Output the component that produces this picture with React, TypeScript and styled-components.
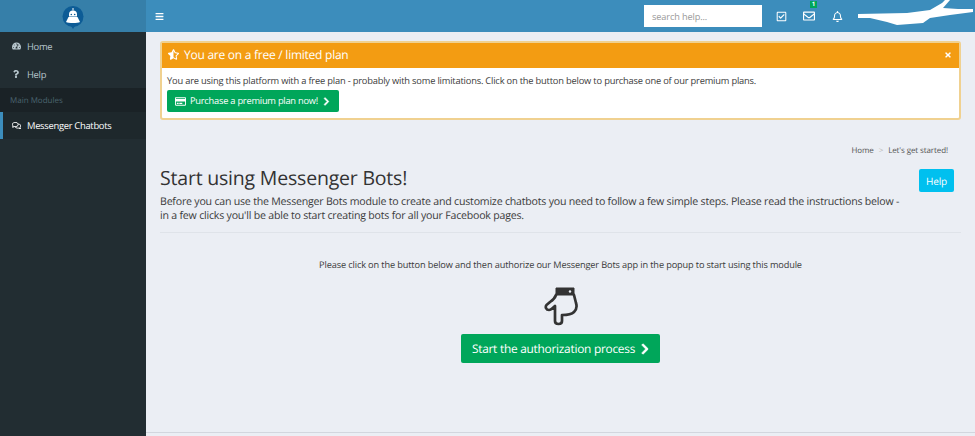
import React from "react";
import styled, { createGlobalStyle } from "styled-components";
import {
  FaTachometerAlt,
  FaQuestion,
  FaRegComments,
  FaBars,
  FaRegCheckSquare,
  FaRegEnvelope,
  FaRegBell,
  FaRegCreditCard,
  FaChevronRight,
  FaTimes,
  FaStarHalfAlt,
} from "react-icons/fa";

const Global = createGlobalStyle`
  html, body { margin: 0; padding: 0; height: 100%; overflow: hidden; }
  body { font-family: "Open Sans", "Liberation Sans", sans-serif; background: #ebeef4; color: #3a3a3a; text-rendering: geometricPrecision; }
  * { box-sizing: border-box; }
`;

const Shell = styled.div`
  display: grid;
  grid-template-columns: 146px 1fr;
  width: 975px;
  height: 436px;
  overflow: hidden;
`;

const Sidebar = styled.aside`
  display: flex;
  flex-direction: column;
  background: #222d32;
`;

const Brand = styled.div`
  height: 32px;
  padding-top: 4px;
  background: #367fa9;
  display: flex;
  justify-content: center;
  align-items: center;
`;

const NavItem = styled.div<{ $active?: boolean }>`
  display: flex;
  align-items: center;
  height: ${(p) => (p.$active ? "27px" : "28px")};
  padding-left: ${(p) => (p.$active ? "9px" : "12px")};
  font-size: 9.4px;
  letter-spacing: -0.29px;
  color: ${(p) => (p.$active ? "#fff" : "#b8c7ce")};
  background: ${(p) => (p.$active ? "#1e282c" : "transparent")};
  border-left: ${(p) => (p.$active ? "3px solid #3c8dbc" : "none")};
`;

const NavIcon = styled.span<{ $start?: boolean }>`
  display: inline-flex;
  justify-content: ${(p) => (p.$start ? "flex-start" : "center")};
  width: 9px;
  margin-right: 6px;
  font-size: 10px;
`;

const NavHeader = styled.div`
  height: 24px;
  background: #1a2226;
  color: #4b646f;
  font-size: 8px;
  padding-left: 10px;
  display: flex;
  align-items: center;
`;

const Column = styled.div`
  display: flex;
  flex-direction: column;
  min-width: 0;
`;

const Topbar = styled.header`
  height: 32px;
  background: #3c8dbc;
  display: flex;
  align-items: center;
  color: #fff;
  position: relative;
`;

const Burger = styled.span`
  display: inline-flex;
  margin-left: 9px;
  font-size: 9px;
`;

const Tools = styled.div`
  margin-left: auto;
  display: flex;
  align-items: center;
  height: 100%;
  padding-right: 124px;
`;

const Search = styled.div`
  width: 118px;
  height: 22px;
  background: #fff;
  color: #999;
  font-size: 9.2px;
  letter-spacing: -0.12px;
  display: flex;
  align-items: center;
  padding-left: 8px;
  margin-right: 5px;
`;

const ToolIcon = styled.span`
  position: relative;
  width: 28px;
  display: inline-flex;
  justify-content: center;
  font-size: 10px;
`;

const Badge = styled.span`
  position: absolute;
  top: -9px;
  left: 15px;
  width: 7px;
  height: 7px;
  background: #00a65a;
  color: #fff;
  font-size: 6px;
  font-weight: 700;
  line-height: 7px;
  text-align: center;
`;

const Scribble = styled.svg`
  position: absolute;
  right: 0;
  top: 0;
`;

const Content = styled.main`
  flex: 1;
  padding: 9px 14px 0 14px;
  display: flex;
  flex-direction: column;
  border-bottom: 1px solid #d2d6de;
  margin-bottom: 3px;
`;

const Alert = styled.section`
  height: 79px;
  background: #fff;
  border: 2px solid #f0d190;
  border-radius: 3px;
  display: flex;
  flex-direction: column;
`;

const AlertHead = styled.div`
  height: 25px;
  background: #f39c12;
  color: #fff;
  display: flex;
  align-items: center;
  padding: 0 7px 2px 6px;
  font-size: 12px;
  letter-spacing: -0.25px;
`;

const AlertTitle = styled.span`
  display: inline-flex;
  align-items: center;
  gap: 5px;
`;

const Close = styled.span`
  margin-left: auto;
  display: inline-flex;
  font-size: 8px;
`;

const AlertBody = styled.div`
  padding: 6px 5px 0;
  font-size: 9.3px;
  letter-spacing: -0.187px;
  line-height: 14px;
`;

const GreenButton = styled.div<{ $large?: boolean }>`
  display: inline-flex;
  align-items: center;
  background: #00a65a;
  color: #fff;
  border-radius: 2px;
  gap: 4px;
  font-size: ${(p) => (p.$large ? "11.9px" : "9.3px")};
  letter-spacing: ${(p) => (p.$large ? "-0.26px" : "-0.24px")};
  height: ${(p) => (p.$large ? "29px" : "22px")};
  padding: ${(p) => (p.$large ? "0 9px 0 11px" : "0 8px")};
`;

const Chevron = styled(FaChevronRight)`
  stroke: currentColor;
  stroke-width: 30px;
`;

const PurchaseRow = styled.div`
  margin-top: 2px;
`;

const Crumbs = styled.nav`
  margin-top: 25px;
  padding-right: 13px;
  display: flex;
  justify-content: flex-end;
  gap: 5px;
  font-size: 8px;
  letter-spacing: -0.1px;
  color: #555;
  line-height: 12px;
`;

const CrumbSep = styled.span`
  color: #bbb;
`;

const HeadingRow = styled.div`
  display: flex;
  align-items: flex-start;
  margin-top: 7px;
  padding-bottom: 9.5px;
  border-bottom: 1px solid #dfe3e9;
`;

const HeadingText = styled.div`
  width: 750px;
`;

const Title = styled.h1`
  margin: 0;
  font-size: 19.5px;
  letter-spacing: -0.2px;
  font-weight: 400;
  line-height: 27px;
  color: #333;
`;

const Lead = styled.p`
  margin: 3.5px 0 0;
  font-size: 10.6px;
  letter-spacing: -0.21px;
  line-height: 14px;
`;

const HelpButton = styled.div`
  margin: 5px 7px 0 auto;
  width: 35px;
  height: 23px;
  background: #00c0ef;
  color: #fff;
  font-size: 10px;
  letter-spacing: -0.1px;
  border-radius: 2px;
  display: flex;
  align-items: center;
  justify-content: center;
`;

const Center = styled.div`
  display: flex;
  flex-direction: column;
  align-items: center;
  padding-top: 25px;
`;

const Instruction = styled.div`
  font-size: 9.2px;
  letter-spacing: -0.13px;
  line-height: 14px;
`;

const Hand = styled.svg`
  margin-top: 14px;
  margin-bottom: 8px;
`;

function Logo() {
  return (
    <svg width="24" height="26" viewBox="0 0 24 26">
      <circle cx="12" cy="11.5" r="10.5" fill="#0d5c96" />
      <path d="M10 21h4l-2 3z" fill="#0d5c96" />
      <path d="M12 3v2.5" stroke="#fff" strokeWidth="1" />
      <path d="M8 9.5a4 4 0 0 1 8 0v2H8z" fill="#fff" />
      <path d="M7.5 12h9l2.5 5c-2 1.4-12 1.4-14 0z" fill="#fff" />
      <circle cx="10.3" cy="9.5" r="0.8" fill="#0d5c96" />
      <circle cx="13.7" cy="9.5" r="0.8" fill="#0d5c96" />
    </svg>
  );
}

export default function App() {
  return (
    <Shell>
      <Global />
      <Sidebar>
        <Brand><Logo /></Brand>
        <NavItem><NavIcon><FaTachometerAlt /></NavIcon>Home</NavItem>
        <NavItem><NavIcon $start><FaQuestion size={8} /></NavIcon>Help</NavItem>
        <NavHeader>Main Modules</NavHeader>
        <NavItem $active><NavIcon><FaRegComments size={11} /></NavIcon>Messenger Chatbots</NavItem>
      </Sidebar>
      <Column>
        <Topbar>
          <Burger><FaBars /></Burger>
          <Tools>
            <Search>search help...</Search>
            <ToolIcon><FaRegCheckSquare size={11} /></ToolIcon>
            <ToolIcon>
              <FaRegEnvelope size={12} />
              <Badge>1</Badge>
            </ToolIcon>
            <ToolIcon><FaRegBell size={11} /></ToolIcon>
          </Tools>
          <Scribble width="118" height="26" viewBox="0 0 118 26">
            <path
              d="M1 14 L50 13 L73 10 L85 3 L88 0 L93 0 L86 8 L101 9 L116 9 L116 12 L93 15 L73 18 L66 23 L40 25 L30 22 L13 18 L1 18 Z"
              fill="#fff"
            />
          </Scribble>
        </Topbar>
        <Content>
          <Alert>
            <AlertHead>
              <AlertTitle><FaStarHalfAlt size={11} />You are on a free / limited plan</AlertTitle>
              <Close><FaTimes /></Close>
            </AlertHead>
            <AlertBody>
              You are using this platform with a free plan - probably with some limitations. Click on the button below to purchase one of our premium plans.
              <PurchaseRow>
                <GreenButton><FaRegCreditCard size={11} />Purchase a premium plan now!<Chevron size={9} /></GreenButton>
              </PurchaseRow>
            </AlertBody>
          </Alert>
          <Crumbs>
            <span>Home</span><CrumbSep>&gt;</CrumbSep><span>Let's get started!</span>
          </Crumbs>
          <HeadingRow>
            <HeadingText>
              <Title>Start using Messenger Bots!</Title>
              <Lead>Before you can use the Messenger Bots module to create and customize chatbots you need to follow a few simple steps. Please read the instructions below - in a few clicks you'll be able to start creating bots for all your Facebook pages.</Lead>
            </HeadingText>
            <HelpButton>Help</HelpButton>
          </HeadingRow>
          <Center>
            <Instruction>Please click on the button below and then authorize our Messenger Bots app in the popup to start using this module</Instruction>
            <Hand width="34" height="40" viewBox="0 0 34 40" fill="none">
              <path d="M12 2h18v7H12z" fill="#333" stroke="#333" strokeWidth="1" strokeLinejoin="round" />
              <circle cx="26" cy="5.5" r="1.2" fill="#ebeef4" />
              <path
                d="M12 9C11 12 9 14 6 16L2.5 19C1 21 2 24 5 24C7 24 9 22 11 20L11 35C11 39 18 39 18 35L18 29C22 29 27 29 30 26C33 23 33 20 32 17L30 9"
                stroke="#333"
                strokeWidth="2.7"
                strokeLinejoin="round"
                strokeLinecap="round"
              />
            </Hand>
            <GreenButton $large>Start the authorization process<Chevron size={12} /></GreenButton>
          </Center>
        </Content>
      </Column>
    </Shell>
  );
}
